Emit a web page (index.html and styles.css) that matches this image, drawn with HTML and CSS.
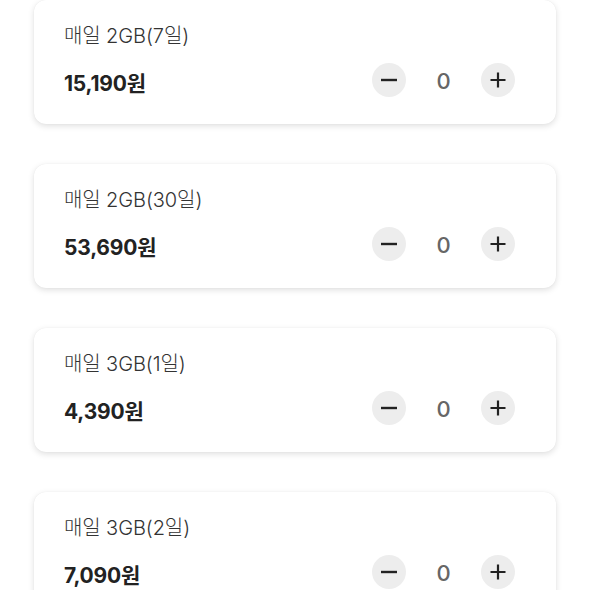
FILE: index.html
```html
<!DOCTYPE html>
<html lang="ko">
<head>
<meta charset="utf-8">
<link rel="stylesheet" href="styles.css">
</head>
<body>
<div class="list">
  <div class="card">
    <div class="title">매일 2GB(7일)</div>
    <div class="row">
      <div class="price">15,190원</div>
      <div class="stepper">
        <button class="btn" aria-label="감소"><svg viewBox="0 0 18 18" width="18" height="18"><path d="M1 9h16" stroke="#222" stroke-width="2.4"/></svg></button>
        <span class="count">0</span>
        <button class="btn" aria-label="증가"><svg viewBox="0 0 18 18" width="18" height="18"><path d="M1.5 9h15M9 1.5v15" stroke="#222" stroke-width="2.2"/></svg></button>
      </div>
    </div>
  </div>
  <div class="card">
    <div class="title">매일 2GB(30일)</div>
    <div class="row">
      <div class="price">53,690원</div>
      <div class="stepper">
        <button class="btn" aria-label="감소"><svg viewBox="0 0 18 18" width="18" height="18"><path d="M1 9h16" stroke="#222" stroke-width="2.4"/></svg></button>
        <span class="count">0</span>
        <button class="btn" aria-label="증가"><svg viewBox="0 0 18 18" width="18" height="18"><path d="M1.5 9h15M9 1.5v15" stroke="#222" stroke-width="2.2"/></svg></button>
      </div>
    </div>
  </div>
  <div class="card">
    <div class="title">매일 3GB(1일)</div>
    <div class="row">
      <div class="price">4,390원</div>
      <div class="stepper">
        <button class="btn" aria-label="감소"><svg viewBox="0 0 18 18" width="18" height="18"><path d="M1 9h16" stroke="#222" stroke-width="2.4"/></svg></button>
        <span class="count">0</span>
        <button class="btn" aria-label="증가"><svg viewBox="0 0 18 18" width="18" height="18"><path d="M1.5 9h15M9 1.5v15" stroke="#222" stroke-width="2.2"/></svg></button>
      </div>
    </div>
  </div>
  <div class="card">
    <div class="title">매일 3GB(2일)</div>
    <div class="row">
      <div class="price">7,090원</div>
      <div class="stepper">
        <button class="btn" aria-label="감소"><svg viewBox="0 0 18 18" width="18" height="18"><path d="M1 9h16" stroke="#222" stroke-width="2.4"/></svg></button>
        <span class="count">0</span>
        <button class="btn" aria-label="증가"><svg viewBox="0 0 18 18" width="18" height="18"><path d="M1.5 9h15M9 1.5v15" stroke="#222" stroke-width="2.2"/></svg></button>
      </div>
    </div>
  </div>
</div>
</body>
</html>
```
FILE: styles.css
```css
html, body {
  margin: 0;
  padding: 0;
  background: #ffffff;
  font-family: Inter, "Noto Sans CJK KR", sans-serif;
  overflow: hidden;
}
.list {
  display: flex;
  flex-direction: column;
  gap: 40px;
  padding: 0 34px;
}
.card {
  background: #fff;
  border-radius: 12px;
  box-shadow: 0 2px 6px rgba(0,0,0,0.13), 0 0 1px rgba(0,0,0,0.08);
  padding: 22px 41px 27px 30px;
  height: 124px;
  box-sizing: border-box;
  display: flex;
  flex-direction: column;
}
.title {
  font-size: 20px;
  line-height: 28px;
  font-weight: 300;
  color: #333;
  letter-spacing: -0.1px;
}
.row {
  margin-top: 13px;
  display: flex;
  align-items: center;
  justify-content: space-between;
  height: 34px;
}
.price {
  font-size: 21px;
  font-weight: 700;
  color: #222;
  letter-spacing: -0.2px;
  padding-top: 3px;
}
.stepper {
  display: flex;
  align-items: center;
}
.btn {
  width: 34px;
  height: 34px;
  border-radius: 50%;
  border: none;
  background: #ededed;
  padding: 0;
  display: flex;
  align-items: center;
  justify-content: center;
}
.count {
  width: 75px;
  text-align: center;
  font-size: 22px;
  color: #666;
  font-weight: 500;
  padding-top: 2px;
}
```
